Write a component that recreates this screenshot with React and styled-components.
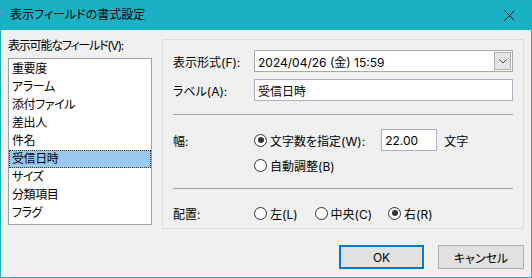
import React from 'react';
import styled, { createGlobalStyle } from 'styled-components';

const Global = createGlobalStyle`
  html, body { margin: 0; padding: 0; background: #ffffff; }
  body {
    font-family: "Inter", "Noto Sans CJK JP", sans-serif;
    font-size: 12px;
    color: #000;
    font-feature-settings: "palt";
  }
  * { box-sizing: border-box; }
`;

const Window = styled.div`
  width: 532px;
  height: 278px;
  border: 1px solid #19b1c3;
  border-top: none;
  display: flex;
  flex-direction: column;
  background: #f0f0f0;
`;

const TitleBar = styled.div`
  height: 30px;
  margin: 0 -1px;
  padding-left: 10px;
  background: #19b1c3;
  display: flex;
  align-items: center;
  justify-content: space-between;
`;

const Title = styled.span`
  font-size: 12px;
  line-height: 16px;
  color: #000;
`;

const CloseBtn = styled.div`
  width: 46px;
  height: 30px;
  display: flex;
  align-items: center;
  justify-content: center;
`;

const Body = styled.div`
  flex: 1;
  display: flex;
  flex-direction: column;
  padding: 9px 7px 0 7px;
`;

const MainRow = styled.div`
  display: flex;
  gap: 10px;
`;

const LeftCol = styled.div`
  width: 144px;
  display: flex;
  flex-direction: column;
`;

const FieldLabel = styled.div`
  line-height: 14px;
  height: 14px;
  white-space: nowrap;
  letter-spacing: -1.2px;
`;

const ListBox = styled.div`
  margin-top: 5px;
  height: 167px;
  background: #fff;
  border: 1px solid #a0a0a0;
  padding-top: 1px;
  display: flex;
  flex-direction: column;
`;

const ListItem = styled.div`
  height: 18px;
  line-height: 18px;
  padding-left: 3px;
  white-space: nowrap;
  letter-spacing: -0.4px;
  background: ${p => (p.$selected ? '#99c9ef' : 'transparent')};
  outline: ${p => (p.$selected ? '1px dotted #333' : 'none')};
  outline-offset: -1px;
`;

const Panel = styled.div`
  width: 362px;
  height: 190px;
  border: 1px solid #dcdcdc;
  padding: 10px 10px 0 10px;
  display: flex;
  flex-direction: column;
`;

const FormRow = styled.div`
  display: flex;
  align-items: center;
  height: 22px;
  margin-top: ${p => p.$mt || 0}px;
`;

const RowLabel = styled.div`
  width: 81px;
  flex-shrink: 0;
  white-space: nowrap;
`;

const SelectBox = styled.div`
  flex: 1;
  height: 22px;
  background: #fff;
  border: 1px solid #a8a8a8;
  display: flex;
  align-items: center;
  justify-content: space-between;
  padding: 0 1px 0 3px;
`;

const DropBtn = styled.div`
  width: 17px;
  height: 18px;
  background: #e5e5e5;
  border: 1px solid #acacac;
  display: flex;
  align-items: center;
  justify-content: center;
`;

const TextInput = styled.div`
  flex: ${p => (p.$w ? '0 0 auto' : 1)};
  width: ${p => (p.$w ? `${p.$w}px` : 'auto')};
  height: 22px;
  background: #fff;
  border: 1px solid #a6b2c2;
  padding-left: 3px;
  display: flex;
  align-items: center;
  white-space: nowrap;
`;

const Separator = styled.div`
  height: 1px;
  background: #a0a0a0;
  margin-top: ${p => p.$mt}px;
`;

const Radio = styled.label`
  display: flex;
  align-items: center;
  gap: 3px;
  white-space: nowrap;
  margin-right: ${p => p.$mr || 0}px;
`;

const RadioCircle = styled.span`
  width: 13px;
  height: 13px;
  border-radius: 50%;
  border: 1px solid #333;
  background: #fff;
  display: flex;
  align-items: center;
  justify-content: center;
  &::after {
    content: '';
    width: 6px;
    height: 6px;
    border-radius: 50%;
    background: ${p => (p.$checked ? '#333' : 'transparent')};
  }
`;

const Spacer = styled.div`
  width: 81px;
  flex-shrink: 0;
`;

const InlineText = styled.span`
  white-space: nowrap;
  margin-left: ${p => p.$ml || 0}px;
`;

const ButtonRow = styled.div`
  display: flex;
  justify-content: flex-end;
  gap: 14px;
  margin-top: 16px;
`;

const Button = styled.div`
  width: ${p => p.$w}px;
  height: 24px;
  display: flex;
  align-items: center;
  justify-content: center;
  background: #e1e1e1;
  border: ${p => (p.$default ? '2px solid #0078d7' : '1px solid #adadad')};
`;

const items = ['重要度', 'アラーム', '添付ファイル', '差出人', '件名', '受信日時', 'サイズ', '分類項目', 'フラグ'];

function RadioOpt({ checked, children, mr }) {
  return (
    <Radio $mr={mr}>
      <RadioCircle $checked={checked} />
      <span>{children}</span>
    </Radio>
  );
}

export default function App() {
  return (
    <>
      <Global />
      <Window>
        <TitleBar>
          <Title>表示フィールドの書式設定</Title>
          <CloseBtn>
            <svg width="11" height="11" viewBox="0 0 11 11">
              <path d="M0.5 0.5 L10.5 10.5 M10.5 0.5 L0.5 10.5" stroke="#1b1b1b" strokeWidth="1" fill="none" />
            </svg>
          </CloseBtn>
        </TitleBar>
        <Body>
          <MainRow>
            <LeftCol>
              <FieldLabel>表示可能なフィールド(V):</FieldLabel>
              <ListBox>
                {items.map(it => (
                  <ListItem key={it} $selected={it === '受信日時'}>{it}</ListItem>
                ))}
              </ListBox>
            </LeftCol>
            <Panel>
              <FormRow>
                <RowLabel>表示形式(F):</RowLabel>
                <SelectBox>
                  <span>2024/04/26 (金) 15:59</span>
                  <DropBtn>
                    <svg width="8" height="5" viewBox="0 0 8 5">
                      <path d="M0.5 0.5 L4 4 L7.5 0.5" stroke="#444" strokeWidth="1" fill="none" />
                    </svg>
                  </DropBtn>
                </SelectBox>
              </FormRow>
              <FormRow $mt={7}>
                <RowLabel>ラベル(A):</RowLabel>
                <TextInput>受信日時</TextInput>
              </FormRow>
              <Separator $mt={13} />
              <FormRow $mt={14}>
                <RowLabel>幅:</RowLabel>
                <RadioOpt checked>文字数を指定(W):</RadioOpt>
                <InlineText $ml={16} />
                <TextInput $w={56}>22.00</TextInput>
                <InlineText $ml={7}>文字</InlineText>
              </FormRow>
              <FormRow $mt={3}>
                <Spacer />
                <RadioOpt>自動調整(B)</RadioOpt>
              </FormRow>
              <Separator $mt={12} />
              <FormRow $mt={13}>
                <RowLabel>配置:</RowLabel>
                <RadioOpt mr={17}>左(L)</RadioOpt>
                <RadioOpt mr={16}>中央(C)</RadioOpt>
                <RadioOpt checked>右(R)</RadioOpt>
              </FormRow>
            </Panel>
          </MainRow>
          <ButtonRow>
            <Button $w={85} $default>OK</Button>
            <Button $w={86}>キャンセル</Button>
          </ButtonRow>
        </Body>
      </Window>
    </>
  );
}
